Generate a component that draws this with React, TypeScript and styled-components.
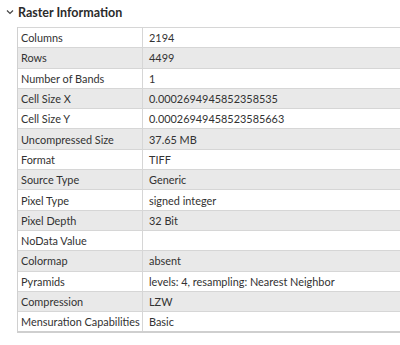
import styled, { createGlobalStyle } from "styled-components";

const GlobalStyle = createGlobalStyle`
    html, body {
        margin: 0;
        padding: 0;
        background: #ffffff;
    }
`;

const Panel = styled.div`
    width: 400px;
    height: 345px;
    overflow: hidden;
    background: #ffffff;
    font-family: Lato, "Open Sans", sans-serif;
    color: #323232;
`;

const Header = styled.div`
    display: flex;
    align-items: center;
    height: 24px;
    padding-left: 6px;
    gap: 4px;
`;

const Title = styled.span`
    font-size: 12.5px;
    font-weight: 700;
    color: #2b2b2b;
`;

const Table = styled.div`
    margin-left: 17px;
    margin-top: 3px;
    border-left: 1px solid #d0d0d0;
    border-bottom: 2px solid #cfcfcf;
`;

const Row = styled.div<{ $shade: boolean }>`
    display: grid;
    grid-template-columns: 124px 1fr;
    height: 20.3px;
    box-sizing: border-box;
    border-top: 1px solid #d6d6d6;
    background: ${props => (props.$shade ? "#e9e9e9" : "#ffffff")};
`;

const Cell = styled.div<{ $divider?: boolean }>`
    display: flex;
    align-items: center;
    padding-left: ${props => (props.$divider ? "6px" : "3px")};
    font-size: 10.9px;
    white-space: nowrap;
    overflow: hidden;
    border-left: ${props => (props.$divider ? "1px solid #d6d6d6" : "none")};
`;

const rows: [string, string][] = [
    ["Columns", "2194"],
    ["Rows", "4499"],
    ["Number of Bands", "1"],
    ["Cell Size X", "0.0002694945852358535"],
    ["Cell Size Y", "0.00026949458523585663"],
    ["Uncompressed Size", "37.65 MB"],
    ["Format", "TIFF"],
    ["Source Type", "Generic"],
    ["Pixel Type", "signed integer"],
    ["Pixel Depth", "32 Bit"],
    ["NoData Value", ""],
    ["Colormap", "absent"],
    ["Pyramids", "levels: 4, resampling: Nearest Neighbor"],
    ["Compression", "LZW"],
    ["Mensuration Capabilities", "Basic"],
];

function App() {
    return (
        <Panel>
            <GlobalStyle />
            <Header>
                <svg width="8" height="8" viewBox="0 0 8 8">
                    <path d="M1 2.5 L4 5.5 L7 2.5" fill="none" stroke="#444" strokeWidth="1.2" />
                </svg>
                <Title>Raster Information</Title>
            </Header>
            <Table>
                {rows.map(([label, value], i) => (
                    <Row key={label} $shade={i % 2 === 1}>
                        <Cell>{label}</Cell>
                        <Cell $divider>{value}</Cell>
                    </Row>
                ))}
            </Table>
        </Panel>
    );
}

export default App;
